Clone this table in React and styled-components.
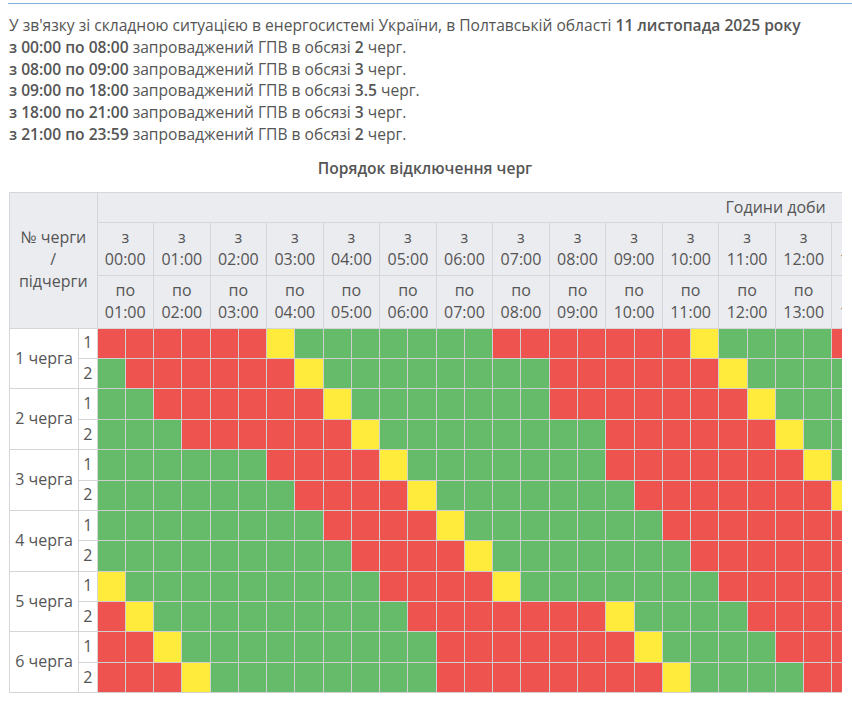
import React from 'react';
import styled, { createGlobalStyle } from 'styled-components';

const GlobalStyle = createGlobalStyle`
  html, body { margin: 0; padding: 0; background: #fff; }
  body {
    font-family: "Open Sans", "Noto Sans", "DejaVu Sans", sans-serif;
    color: #555;
  }
`;

const Page = styled.div`
  width: 852px;
  box-sizing: border-box;
  padding: 3px 0 0 8px;
  overflow: hidden;
`;

const TopRule = styled.div`
  border-top: 1px solid #86afd6;
`;

const Notice = styled.div`
  margin: 11px 0 0 1px;
  font-size: 15.6px;
  line-height: 21.8px;
`;

const Line = styled.div`
  white-space: nowrap;
`;

const B = styled.b`
  font-weight: 600;
`;

const Title = styled.div`
  margin: 12px 0 0;
  width: 834px;
  text-align: center;
  font-size: 15.6px;
  font-weight: 600;
  line-height: 21.8px;
`;

const TableWrap = styled.div`
  margin: 12px 0 0 1px;
  width: 833px;
  overflow: hidden;
`;

const Table = styled.table`
  border-collapse: collapse;
  table-layout: fixed;
  width: 1445px;
  font-size: 16px;
  line-height: 21.8px;
`;

const Th = styled.th`
  background: #ebecf0;
  border: 1px solid #d6d6d8;
  font-weight: 400;
  text-align: center;
  vertical-align: middle;
  padding: 4px;
  color: #555;
`;

const NameCell = styled.td`
  border: 1px solid #d6d6d8;
  background: #fff;
  text-align: center;
  white-space: nowrap;
  padding: 0 4px;
`;

const NumCell = styled.td`
  border: 1px solid #d6d6d8;
  background: #fff;
  text-align: center;
  padding: 0;
  height: 29.4px;
`;

const COLORS = { R: '#ef5350', G: '#66bb6a', Y: '#ffeb3b' };

const Slot = styled.td`
  border: 1px solid #cfcfcf;
  padding: 0;
  background: ${(p) => COLORS[p.$s]};
`;

const visible = [
  'RRRRRRYGGGGGGGRRRRRRRYGGGGR',
  'GRRRRRRYGGGGGGGGRRRRRRYGGGG',
  'GGRRRRRRYGGGGGGGRRRRRRRYGGG',
  'GGGRRRRRRYGGGGGGGGRRRRRRYGG',
  'GGGGGGRRRRYGGGGGGGRRRRRRRYG',
  'GGGGGGGRRRRYGGGGGGGRRRRRRRY',
  'GGGGGGGGRRRRYGGGGGGGRRRRRRR',
  'GGGGGGGGGRRRRYGGGGGGGRRRRRR',
  'YGGGGGGGGGRRRRYGGGGGGGRRRRR',
  'RYGGGGGGGGGRRRRRRRYGGGGRRRR',
  'RRYGGGGGGGGGRRRRRRRYGGGGRRR',
  'RRRYGGGGGGGGRRRRRRRRYGGGGRR',
];

const rows = visible.map((s) => (s + 'RRRRYGGGGGGGRRRRRRYGGGGGG').slice(0, 48));

const pad = (n) => String(n).padStart(2, '0') + ':00';
const hours = Array.from({ length: 24 }, (_, i) => i);

export default function App() {
  return (
    <>
      <GlobalStyle />
      <Page>
        <TopRule />
        <Notice>
          <Line>
            У зв'язку зі складною ситуацією в енергосистемі України, в Полтавській області{' '}
            <B>11 листопада 2025 року</B>
          </Line>
          <Line><B>з 00:00 по 08:00</B> запроваджений ГПВ в обсязі <B>2</B> черг.</Line>
          <Line><B>з 08:00 по 09:00</B> запроваджений ГПВ в обсязі <B>3</B> черг.</Line>
          <Line><B>з 09:00 по 18:00</B> запроваджений ГПВ в обсязі <B>3.5</B> черг.</Line>
          <Line><B>з 18:00 по 21:00</B> запроваджений ГПВ в обсязі <B>3</B> черг.</Line>
          <Line><B>з 21:00 по 23:59</B> запроваджений ГПВ в обсязі <B>2</B> черг.</Line>
        </Notice>
        <Title>Порядок відключення черг</Title>
        <TableWrap>
          <Table>
            <colgroup>
              <col style={{ width: 69 }} />
              <col style={{ width: 18.5 }} />
              {Array.from({ length: 48 }, (_, i) => (
                <col key={i} style={{ width: 28.27 }} />
              ))}
            </colgroup>
            <thead>
              <tr>
                <Th rowSpan={3} colSpan={2}>
                  № черги<br />/<br />підчерги
                </Th>
                <Th colSpan={48}>Години доби</Th>
              </tr>
              <tr>
                {hours.map((h) => (
                  <Th key={h} colSpan={2}>з<br />{pad(h)}</Th>
                ))}
              </tr>
              <tr>
                {hours.map((h) => (
                  <Th key={h} colSpan={2}>по<br />{h === 23 ? '24:00' : pad(h + 1)}</Th>
                ))}
              </tr>
            </thead>
            <tbody>
              {rows.map((r, i) => (
                <tr key={i}>
                  {i % 2 === 0 && <NameCell rowSpan={2}>{i / 2 + 1} черга</NameCell>}
                  <NumCell>{(i % 2) + 1}</NumCell>
                  {r.split('').map((s, j) => (
                    <Slot key={j} $s={s} />
                  ))}
                </tr>
              ))}
            </tbody>
          </Table>
        </TableWrap>
      </Page>
    </>
  );
}
